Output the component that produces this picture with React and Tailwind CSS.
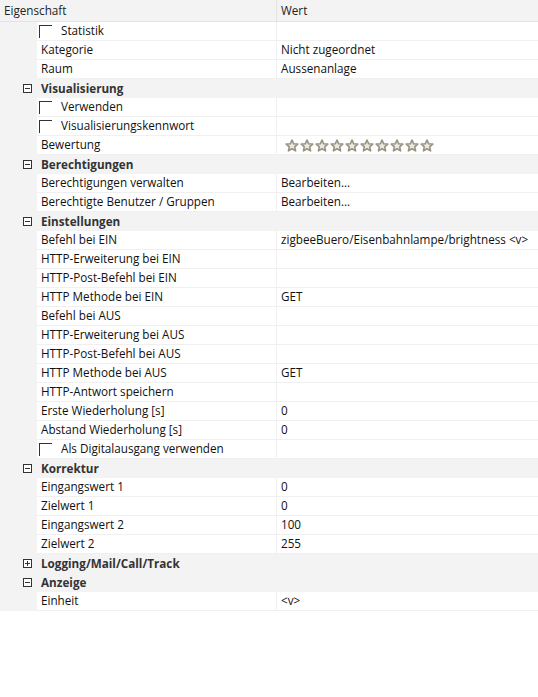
import React from "react";

const rows = [
  { type: "check", label: "Statistik" },
  { type: "prop", label: "Kategorie", value: "Nicht zugeordnet" },
  { type: "prop", label: "Raum", value: "Aussenanlage" },
  { type: "cat", label: "Visualisierung", open: true },
  { type: "check", label: "Verwenden" },
  { type: "check", label: "Visualisierungskennwort" },
  { type: "stars", label: "Bewertung" },
  { type: "cat", label: "Berechtigungen", open: true },
  { type: "prop", label: "Berechtigungen verwalten", value: "Bearbeiten..." },
  { type: "prop", label: "Berechtigte Benutzer / Gruppen", value: "Bearbeiten..." },
  { type: "cat", label: "Einstellungen", open: true },
  { type: "prop", label: "Befehl bei EIN", value: "zigbeeBuero/Eisenbahnlampe/brightness <v>" },
  { type: "prop", label: "HTTP-Erweiterung bei EIN", value: "" },
  { type: "prop", label: "HTTP-Post-Befehl bei EIN", value: "" },
  { type: "prop", label: "HTTP Methode bei EIN", value: "GET" },
  { type: "prop", label: "Befehl bei AUS", value: "" },
  { type: "prop", label: "HTTP-Erweiterung bei AUS", value: "" },
  { type: "prop", label: "HTTP-Post-Befehl bei AUS", value: "" },
  { type: "prop", label: "HTTP Methode bei AUS", value: "GET" },
  { type: "prop", label: "HTTP-Antwort speichern", value: "" },
  { type: "prop", label: "Erste Wiederholung [s]", value: "0" },
  { type: "prop", label: "Abstand Wiederholung [s]", value: "0" },
  { type: "check", label: "Als Digitalausgang verwenden" },
  { type: "cat", label: "Korrektur", open: true },
  { type: "prop", label: "Eingangswert 1", value: "0" },
  { type: "prop", label: "Zielwert 1", value: "0" },
  { type: "prop", label: "Eingangswert 2", value: "100" },
  { type: "prop", label: "Zielwert 2", value: "255" },
  { type: "cat", label: "Logging/Mail/Call/Track", open: false },
  { type: "cat", label: "Anzeige", open: true },
  { type: "prop", label: "Einheit", value: "<v>" },
];

function Toggle({ open }) {
  return (
    <svg width="9" height="9" viewBox="0 0 9 9" className="block">
      <rect x="0.5" y="0.5" width="8" height="8" fill="#fff" stroke="#333" />
      <line x1="2" y1="4.5" x2="7" y2="4.5" stroke="#333" />
      {!open && <line x1="4.5" y1="2" x2="4.5" y2="7" stroke="#333" />}
    </svg>
  );
}

function Star() {
  return (
    <svg width="14" height="13" viewBox="0 0 14 13" className="block">
      <path
        d="M7 1 L8.7 4.8 L12.8 5.1 L9.7 7.8 L10.6 11.9 L7 9.7 L3.4 11.9 L4.3 7.8 L1.2 5.1 L5.3 4.8 Z"
        fill="#ebe8e0"
        stroke="#9a9282"
        strokeWidth="1.6"
        strokeLinejoin="round"
      />
    </svg>
  );
}

function Checkbox() {
  return <span className="block w-[13px] h-[13px] border-l border-t border-[#333]" />;
}

function Row({ r }) {
  if (r.type === "cat") {
    return (
      <div className="flex h-[19px] items-center bg-[#f3f3f3]">
        <div className="w-[37px] flex justify-end pr-[5px]">
          <Toggle open={r.open} />
        </div>
        <span className="pl-[4px] font-bold text-[#333]">{r.label}</span>
      </div>
    );
  }
  return (
    <div className="flex h-[19px]">
      <div className="w-[37px] shrink-0 bg-[#f3f3f3]" />
      <div className="flex flex-1 border-b border-[#f0f0f0] bg-white">
        <div className="w-[240px] shrink-0 flex items-center border-r border-[#f0f0f0] pl-[4px]">
          {r.type === "check" ? (
            <div className="flex items-center">
              <span className="ml-[-2px] mt-[1px]"><Checkbox /></span>
              <span className="pl-[9px]">{r.label}</span>
            </div>
          ) : (
            <span>{r.label}</span>
          )}
        </div>
        <div className="flex-1 flex items-center pl-[4px]">
          {r.type === "stars" ? (
            <div className="flex gap-[1px] pl-[4px]">
              {Array.from({ length: 10 }).map((_, i) => (
                <Star key={i} />
              ))}
            </div>
          ) : (
            <span>{r.value}</span>
          )}
        </div>
      </div>
    </div>
  );
}

export default function App() {
  return (
    <div
      className="w-[538px] h-[697px] bg-white text-[11.7px] text-[#111] leading-none overflow-hidden"
      style={{ fontFamily: '"Open Sans", "Noto Sans", sans-serif' }}
    >
      <div className="flex h-[22px] bg-[#f3f3f3] border-b border-[#e3e3e3] text-[#222]">
        <div className="w-[277px] flex items-center pl-[4px] border-r border-[#e3e3e3]">Eigenschaft</div>
        <div className="flex-1 flex items-center pl-[4px]">Wert</div>
      </div>
      {rows.map((r, i) => (
        <Row key={i} r={r} />
      ))}
    </div>
  );
}
